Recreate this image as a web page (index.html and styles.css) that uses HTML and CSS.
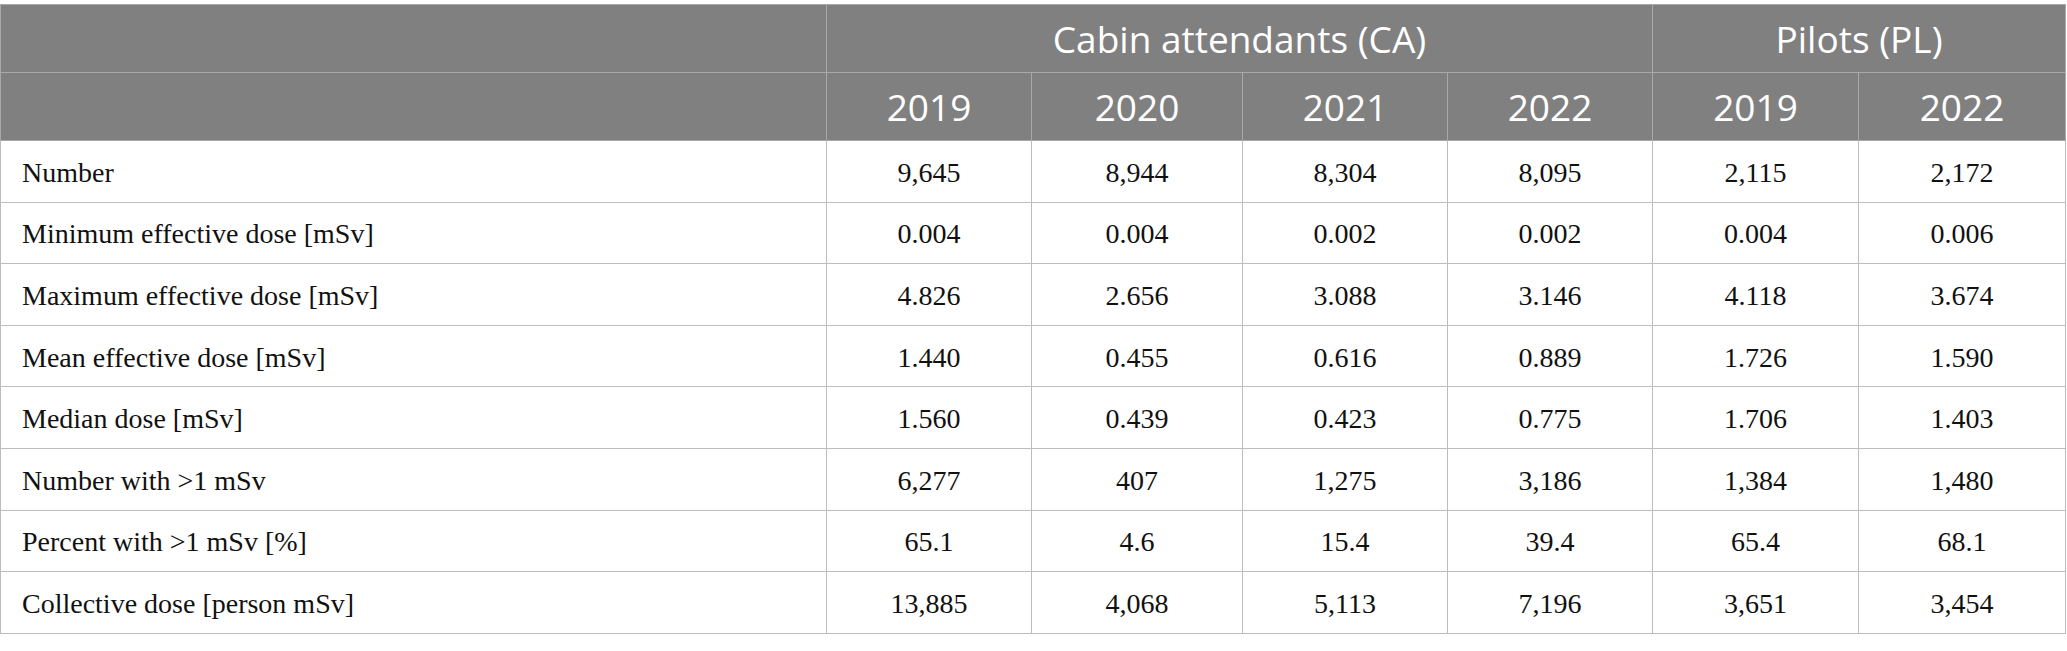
FILE: index.html
```html
<!DOCTYPE html>
<html>
<head>
<meta charset="utf-8">
<link rel="stylesheet" href="styles.css">
</head>
<body>
<table class="data">
  <colgroup>
    <col class="c-label">
    <col class="c-a">
    <col class="c-b">
    <col class="c-a">
    <col class="c-a">
    <col class="c-c">
    <col class="c-d">
  </colgroup>
  <thead>
    <tr>
      <th></th>
      <th colspan="4">Cabin attendants (CA)</th>
      <th colspan="2">Pilots (PL)</th>
    </tr>
    <tr>
      <th></th>
      <th>2019</th><th>2020</th><th>2021</th><th>2022</th><th>2019</th><th>2022</th>
    </tr>
  </thead>
  <tbody>
    <tr><td>Number</td><td>9,645</td><td>8,944</td><td>8,304</td><td>8,095</td><td>2,115</td><td>2,172</td></tr>
    <tr><td>Minimum effective dose [mSv]</td><td>0.004</td><td>0.004</td><td>0.002</td><td>0.002</td><td>0.004</td><td>0.006</td></tr>
    <tr><td>Maximum effective dose [mSv]</td><td>4.826</td><td>2.656</td><td>3.088</td><td>3.146</td><td>4.118</td><td>3.674</td></tr>
    <tr><td>Mean effective dose [mSv]</td><td>1.440</td><td>0.455</td><td>0.616</td><td>0.889</td><td>1.726</td><td>1.590</td></tr>
    <tr><td>Median dose [mSv]</td><td>1.560</td><td>0.439</td><td>0.423</td><td>0.775</td><td>1.706</td><td>1.403</td></tr>
    <tr><td>Number with &gt;1 mSv</td><td>6,277</td><td>407</td><td>1,275</td><td>3,186</td><td>1,384</td><td>1,480</td></tr>
    <tr><td>Percent with &gt;1 mSv [%]</td><td>65.1</td><td>4.6</td><td>15.4</td><td>39.4</td><td>65.4</td><td>68.1</td></tr>
    <tr><td>Collective dose [person mSv]</td><td>13,885</td><td>4,068</td><td>5,113</td><td>7,196</td><td>3,651</td><td>3,454</td></tr>
  </tbody>
</table>
</body>
</html>
```
FILE: styles.css
```css
html, body {
  margin: 0;
  padding: 0;
  background: #ffffff;
}
body {
  padding-top: 4px;
}
.data {
  border-collapse: collapse;
  table-layout: fixed;
  width: 2066px;
}
.c-label { width: 826px; }
.c-a { width: 205px; }
.c-b { width: 211px; }
.c-c { width: 206px; }
.c-d { width: 207px; }
.data th {
  background: #7f807f;
  color: #ffffff;
  font-family: "Open Sans", "Noto Sans", sans-serif;
  font-weight: 400;
  font-size: 37px;
  height: 67px;
  padding: 0;
  text-align: center;
  vertical-align: middle;
  border: 1px solid #a8a8a8;
}
.data td {
  font-family: "Liberation Serif", serif;
  font-size: 28px;
  color: #111111;
  height: 57.6px;
  padding: 3px 0 0;
  text-align: center;
  vertical-align: middle;
  border: 1px solid #bdbdbd;
}
.data td:first-child {
  text-align: left;
  padding-left: 21px;
}
```
